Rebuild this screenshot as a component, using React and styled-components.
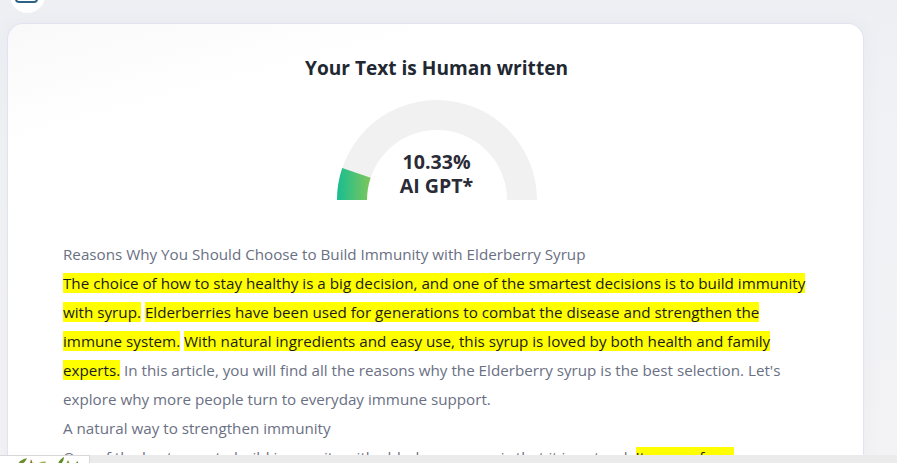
import React from 'react';
import styled, { createGlobalStyle } from 'styled-components';

const GlobalStyle = createGlobalStyle`
  html, body {
    margin: 0;
    height: 100%;
    overflow: hidden;
  }
  body {
    background: linear-gradient(180deg, #eeeff3 0%, #f1f2f5 30%, #f3f3f6 100%);
    font-family: 'Open Sans', 'Noto Sans', sans-serif;
  }
`;

const Page = styled.div`
  display: flex;
  flex-direction: column;
  padding: 0 33px 0 7px;
  height: 463px;
  box-sizing: border-box;
`;

const TopStrip = styled.div`
  height: 23px;
  display: flex;
  align-items: flex-start;
  padding-left: 3px;
`;

const RoundButton = styled.div`
  width: 35px;
  height: 35px;
  margin-top: -22px;
  border-radius: 50%;
  background: #ffffff;
  display: flex;
  align-items: flex-end;
  justify-content: flex-start;
  padding: 0 0 10px 5px;
  box-sizing: border-box;
  flex-shrink: 0;
`;

const ButtonGlyph = styled.div`
  width: 23px;
  height: 14px;
  border: 2px solid #2e6186;
  border-radius: 4px;
  box-sizing: border-box;
`;

const Card = styled.section`
  flex: 1;
  background: linear-gradient(165deg, #f9f9fa 0%, #ffffff 18%);
  border: 1px solid #e2e2f2;
  border-bottom: none;
  border-radius: 16px 16px 0 0;
  box-shadow: 0 0 18px rgba(120, 120, 150, 0.06);
  padding: 30px 53px 0 55px;
  overflow: hidden;
`;

const Title = styled.h2`
  margin: 0;
  text-align: center;
  font-size: 19.1px;
  line-height: 28px;
  font-weight: 700;
  color: #222832;
`;

const GaugeWrap = styled.div`
  position: relative;
  width: 200px;
  height: 100px;
  margin: 18px auto 0;
  svg {
    display: block;
  }
`;

const GaugeLabel = styled.div`
  position: absolute;
  left: 0;
  right: 0;
  bottom: 2px;
  text-align: center;
  font-size: 19.6px;
  line-height: 24px;
  font-weight: 700;
  color: #2a2b37;
`;

const Body = styled.div`
  margin-top: 40px;
  font-size: 15.2px;
  line-height: 29px;
  color: #6a7083;
`;

const Heading = styled.div``;

const Para = styled.p`
  margin: 0;
`;

const Mark = styled.span`
  background: #ffff00;
  color: #1b1b1b;
`;

const BottomBar = styled.div`
  position: fixed;
  left: 0;
  right: 0;
  bottom: 0;
  height: 8px;
  background: #ebebeb;
  display: flex;
`;

const Thumb = styled.div`
  width: 90px;
  height: 8px;
  background: #ffffff;
  border-top: 1px solid #d8d8d8;
  border-right: 1px solid #d8d8d8;
  box-sizing: border-box;
  svg {
    display: block;
  }
`;

const pct = 10.33;

function arcPath(fraction) {
  const a = Math.PI * fraction;
  const ox = 100 - 100 * Math.cos(a);
  const oy = 100 - 100 * Math.sin(a);
  const ix = 100 - 70 * Math.cos(a);
  const iy = 100 - 70 * Math.sin(a);
  return `M 0 100 A 100 100 0 0 1 ${ox} ${oy} L ${ix} ${iy} A 70 70 0 0 0 30 100 Z`;
}

const Gauge = ({ value }) => (
  <GaugeWrap>
    <svg width="200" height="100" viewBox="0 0 200 100">
      <defs>
        <linearGradient id="gaugeGreen" x1="0" y1="0" x2="1" y2="0">
          <stop offset="0%" stopColor="#17bd92" />
          <stop offset="100%" stopColor="#7fc65a" />
        </linearGradient>
      </defs>
      <path d="M 0 100 A 100 100 0 0 1 200 100 L 170 100 A 70 70 0 0 0 30 100 Z" fill="#f1f1f1" />
      <path d={arcPath(value / 100)} fill="url(#gaugeGreen)" />
    </svg>
    <GaugeLabel>
      {value.toFixed(2)}%<br />AI GPT*
    </GaugeLabel>
  </GaugeWrap>
);

export default function App() {
  return (
    <>
      <GlobalStyle />
      <Page>
        <TopStrip>
          <RoundButton>
            <ButtonGlyph />
          </RoundButton>
        </TopStrip>
        <Card>
          <Title>Your Text is Human written</Title>
          <Gauge value={pct} />
          <Body>
            <Heading>Reasons Why You Should Choose to Build Immunity with Elderberry Syrup</Heading>
            <Para>
              <Mark>The choice of how to stay healthy is a big decision, and one of the smartest decisions is to build immunity with syrup.</Mark>{' '}
              <Mark>Elderberries have been used for generations to combat the disease and strengthen the immune system.</Mark>{' '}
              <Mark>With natural ingredients and easy use, this syrup is loved by both health and family experts.</Mark>{' '}
              In this article, you will find all the reasons why the Elderberry syrup is the best selection. Let's explore why more people turn to everyday immune support.
            </Para>
            <Heading>A natural way to strengthen immunity</Heading>
            <Para>
              One of the best ways to build immunity with elderberry syrup is that it is natural.{' '}
              <Mark>It comes from elderberries, which are rich in antioxidants and vitamins.</Mark>
            </Para>
          </Body>
        </Card>
      </Page>
      <BottomBar>
        <Thumb>
          <svg width="90" height="8" viewBox="0 0 90 8">
            <path d="M18 8 C20 4 24 3 27 2 C26 5 24 7 22 8 Z" fill="#6a8f2a" />
            <path d="M30 8 L31 3 L33 8 Z" fill="#8a6a3a" />
            <path d="M38 8 C40 6 43 5 46 6 L45 8 Z" fill="#9bb55a" />
            <path d="M58 8 C59 4 62 2 64 1 C64 4 62 7 61 8 Z" fill="#5e8c26" />
            <path d="M66 8 L68 4 L70 8 Z" fill="#7aa33a" />
            <path d="M76 8 L77 5 L79 8 Z" fill="#4f7a22" />
          </svg>
        </Thumb>
      </BottomBar>
    </>
  );
}
